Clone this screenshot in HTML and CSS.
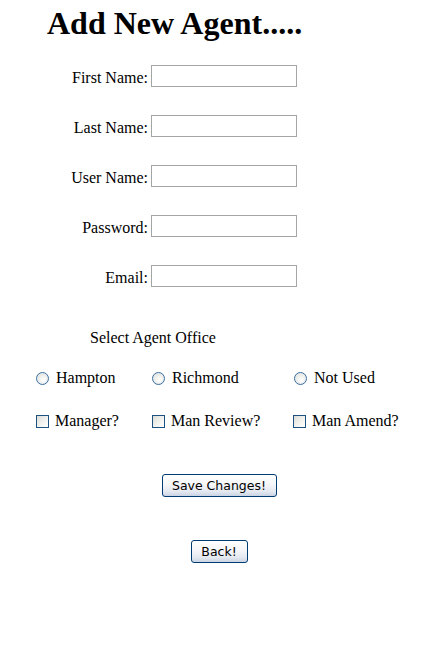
FILE: index.html
```html
<!DOCTYPE html>
<html>
<head>
<meta charset="utf-8">
<title>Add New Agent</title>
<link rel="stylesheet" href="styles.css">
</head>
<body>
<h1 class="title">Add New Agent.....</h1>
<form class="agent-form">
  <div class="fields">
    <label class="field-label" for="fn">First Name:</label><input class="text-input" id="fn" type="text">
    <label class="field-label" for="ln">Last Name:</label><input class="text-input" id="ln" type="text">
    <label class="field-label" for="un">User Name:</label><input class="text-input" id="un" type="text">
    <label class="field-label" for="pw">Password:</label><input class="text-input" id="pw" type="password">
    <label class="field-label" for="em">Email:</label><input class="text-input" id="em" type="text">
  </div>
  <p class="office-label">Select Agent Office</p>
  <div class="options">
    <label class="option"><input class="radio" type="radio" name="office"><span>Hampton</span></label>
    <label class="option"><input class="radio" type="radio" name="office"><span>Richmond</span></label>
    <label class="option option-last"><input class="radio" type="radio" name="office"><span>Not Used</span></label>
    <label class="option"><input class="check" type="checkbox"><span>Manager?</span></label>
    <label class="option"><input class="check" type="checkbox"><span>Man Review?</span></label>
    <label class="option"><input class="check" type="checkbox"><span>Man Amend?</span></label>
  </div>
  <div class="actions">
    <button class="btn btn-save" type="button">Save Changes!</button>
    <button class="btn btn-back" type="button">Back!</button>
  </div>
</form>
</body>
</html>
```
FILE: styles.css
```css
html, body {
  margin: 0;
  padding: 0;
  background: #ffffff;
  color: #000000;
  font-family: "Liberation Serif", "Times New Roman", serif;
  font-size: 16px;
}

.title {
  margin: 0;
  padding: 5px 0 0 47px;
  font-size: 32px;
  line-height: 36px;
  font-weight: bold;
}

.agent-form {
  margin: 0;
}

.fields {
  display: grid;
  grid-template-columns: 148px 146px;
  column-gap: 3px;
  row-gap: 28px;
  margin-top: 24px;
  align-items: center;
}

.field-label {
  text-align: right;
  line-height: 18px;
  padding-top: 4px;
}

.text-input {
  box-sizing: border-box;
  width: 146px;
  height: 22px;
  margin: 0;
  border: 1px solid #a5a5a5;
  background: #fff;
  padding: 0 2px;
  font-size: 13px;
}

.office-label {
  margin: 42px 0 0 90px;
  line-height: 18px;
}

.options {
  display: grid;
  grid-template-columns: 116px 141px auto;
  grid-auto-rows: 20px;
  row-gap: 23px;
  margin-top: 21px;
  padding-left: 36px;
  align-items: center;
}

.option {
  display: flex;
  align-items: center;
  line-height: 18px;
}

.option-last {
  margin-left: 1px;
}

.radio,
.check {
  -webkit-appearance: none;
  appearance: none;
  box-sizing: border-box;
  width: 13px;
  height: 13px;
  margin: 0 7px 0 0;
  flex: none;
}

.radio {
  border-radius: 50%;
  border: 1px solid #3c6e9c;
  background: radial-gradient(circle at 60% 65%, #ffffff 0%, #f2f2ee 40%, #d8d8d2 100%);
  box-shadow: inset 0 0 0 1px #e8edf2;
}

.check {
  margin-right: 6px;
  border: 1px solid #1c5180;
  background: linear-gradient(135deg, #dcdcd7 0%, #f2f2ef 55%, #ffffff 100%);
}

.actions {
  display: flex;
  flex-direction: column;
  align-items: center;
  width: 438px;
  row-gap: 43px;
  margin-top: 43px;
}

.btn {
  box-sizing: border-box;
  height: 23px;
  margin: 0;
  padding: 0 8px;
  border: 1px solid #003c74;
  border-radius: 3px;
  background: linear-gradient(180deg, #ffffff 0%, #f5f6f8 45%, #e3e8f0 80%, #c9d3e3 100%);
  font-family: "DejaVu Sans", "Liberation Sans", sans-serif;
  font-size: 12.5px;
  color: #000;
}

.btn-save {
  width: 115px;
}

.btn-back {
  width: 57px;
}
```
